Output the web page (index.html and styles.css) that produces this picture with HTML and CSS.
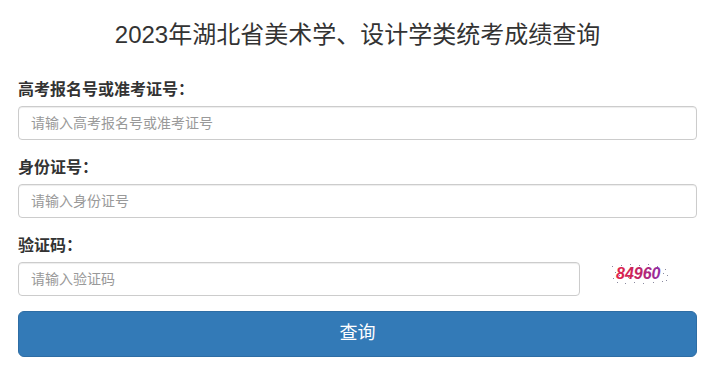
FILE: index.html
```html
<!DOCTYPE html>
<html lang="zh-CN">
<head>
  <meta charset="utf-8">
  <title>2023年湖北省美术学、设计学类统考成绩查询</title>
  <link rel="stylesheet" href="styles.css">
</head>
<body>

  <div class="container">
    <h3 class="title">2023年湖北省美术学、设计学类统考成绩查询</h3>

    <form class="query-form" onsubmit="return false">
      <div class="form-group">
        <label for="ksh">高考报名号或准考证号：</label>
        <input type="text" id="ksh" class="form-control" placeholder="请输入高考报名号或准考证号">
      </div>

      <div class="form-group">
        <label for="sfzh">身份证号：</label>
        <input type="text" id="sfzh" class="form-control" placeholder="请输入身份证号">
      </div>

      <div class="form-group last">
        <label for="yzm">验证码：</label>
        <div class="captcha-row">
          <input type="text" id="yzm" class="form-control captcha-input" placeholder="请输入验证码">
          <!-- captcha picture -->
          <svg class="captcha" width="60" height="22" viewBox="0 0 60 22">
            <defs>
              <linearGradient id="cg" x1="0" x2="1" y1="0" y2="0">
                <stop offset="0" stop-color="#e0234a"/>
                <stop offset="0.45" stop-color="#c8245e"/>
                <stop offset="1" stop-color="#8f2ca8"/>
              </linearGradient>
            </defs>
            <g fill="#8a8aa0">
              <rect x="2" y="3" width="1" height="1"/>
              <rect x="5" y="9" width="1" height="1"/>
              <rect x="3" y="15" width="1" height="1"/>
              <rect x="7" y="19" width="1" height="1"/>
              <rect x="11" y="2" width="1" height="1"/>
              <rect x="15" y="20" width="1" height="1"/>
              <rect x="20" y="1" width="1" height="1"/>
              <rect x="24" y="19" width="1" height="1"/>
              <rect x="29" y="2" width="1" height="1"/>
              <rect x="33" y="20" width="1" height="1"/>
              <rect x="38" y="1" width="1" height="1"/>
              <rect x="43" y="19" width="1" height="1"/>
              <rect x="47" y="3" width="1" height="1"/>
              <rect x="52" y="18" width="1" height="1"/>
              <rect x="55" y="6" width="1" height="1"/>
              <rect x="57" y="12" width="1" height="1"/>
              <rect x="56" y="17" width="1" height="1"/>
              <rect x="53" y="10" width="1" height="1"/>
              <rect x="9" y="12" width="1" height="1"/>
              <rect x="18" y="14" width="1" height="1"/>
              <rect x="36" y="8" width="1" height="1"/>
            </g>
            <text x="6" y="16" class="captcha-text" fill="url(#cg)">84960</text>
          </svg>
        </div>
      </div>

      <button type="submit" class="btn-query">查询</button>
    </form>
  </div>

</body>
</html>
```

FILE: styles.css
```css
body {
  margin: 0;
  background-color: #fff;
  font-family: "Liberation Sans", "Noto Sans CJK SC", sans-serif;
  color: #333;
}

.container {
  padding: 20px 14px 0 18px;
}

.title {
  margin: 0 0 28px;
  font-size: 24px;
  font-weight: normal;
  line-height: 30px;
  text-align: center;
  color: #333;
}

.form-group {
  margin-bottom: 16px;
}

.form-group.last {
  margin-bottom: 15px;
}

label {
  display: block;
  margin-bottom: 4px;
  font-size: 16px;
  font-weight: bold;
  line-height: 24px;
  color: #333;
}

.form-control {
  display: block;
  box-sizing: border-box;
  width: 100%;
  height: 34px;
  padding: 6px 12px;
  font-family: inherit;
  font-size: 14px;
  color: #555;
  background-color: #fff;
  border: 1px solid #ccc;
  border-radius: 4px;
  box-shadow: inset 0 1px 1px rgba(0, 0, 0, 0.075);
}

.form-control::placeholder {
  color: #999;
}

.captcha-row {
  display: flex;
  align-items: center;
}

.captcha-input {
  width: 562px;
  flex: none;
}

.captcha {
  margin-left: 30px;
  margin-top: -10px;
}

.captcha-text {
  font-family: "Liberation Sans", sans-serif;
  font-size: 16px;
  font-weight: bold;
  font-style: italic;
}

.btn-query {
  display: block;
  box-sizing: border-box;
  width: 100%;
  height: 46px;
  padding: 10px 16px;
  font-family: inherit;
  font-size: 18px;
  line-height: 1.33;
  color: #fff;
  background-color: #337ab7;
  border: 1px solid #2e6da4;
  border-radius: 6px;
  cursor: pointer;
}
```
